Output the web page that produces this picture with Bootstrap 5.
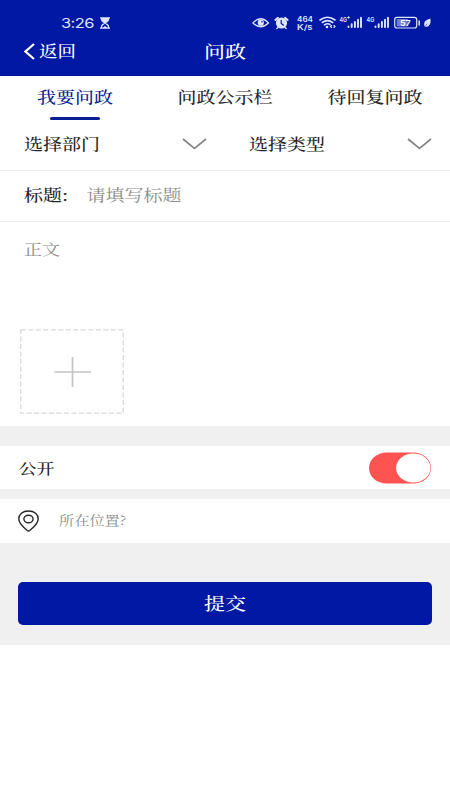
<!DOCTYPE html>
<html lang="zh-CN">
<head>
<meta charset="utf-8">
<meta name="viewport" content="width=device-width, initial-scale=1">
<title>问政</title>
<link href="https://cdn.jsdelivr.net/npm/bootstrap@5.3.0/dist/css/bootstrap.min.css" rel="stylesheet">
<style>
body{font-family:"Noto Serif CJK SC","Noto Sans CJK SC",serif;color:#252525;font-size:19px;line-height:1;background:#fff}
.wide{display:inline-block;transform:translateY(-.5px) scaleY(.83);line-height:1;white-space:nowrap;font-weight:500}
.app-head{height:76px;background:#0018a3;color:#fff}
.status{height:32px;padding:13px 18px 0 61px;font-family:Inter,"Noto Sans",sans-serif;color:#dfe5ff}
.clock{font-size:16.5px;width:33px;letter-spacing:-.6px;transform:scaleY(.83);line-height:20px}
.sandglass{margin:4px 0 0 5px}
.indicators{margin-top:-2px}
.status svg,.ico{display:block;flex:none}
.titlebar{height:38px}
.back{font-size:18.5px;padding-left:24px;color:#fff}
.title{font-size:21px}
.tabs{height:44px}
.tabs a{height:44px;color:#252525;text-decoration:none;padding-top:12px}
.tabs .wide{transform:translateY(-1.7px) scaleY(.83)}
.tabs a.active{color:#0a1f8f}
.tabs a.active::after{content:"";width:50px;height:3px;border-radius:2px;background:#0a1f95;margin-top:10px}
.picks{height:51px;border-bottom:1px solid #ececec}
.picks>div{padding:0 18px 3px 24px}
.subject{height:51px;padding:0 24px;border-bottom:1px solid #ececec}
.subject label{width:62.5px}
.subject .wide{transform:translateY(-2.2px) scaleY(.83)}
.hint,.hint .wide{color:#8c8c8c;font-weight:400}
.content-box{height:204px;padding:18px 20px 0}
.content-box .hint{font-size:18px;padding-left:4px;height:89px}
.upload{width:104px;height:85px}
.panel{background:#f0f0f0;height:219px;padding-top:20px}
.line{height:43px;background:#fff}
.public-line{font-size:18px;padding:0 18px 0 18.5px;margin-bottom:10px}
.public-line .wide{transform:translateY(-1px) scaleY(.83)}
.place-line{height:44px;padding-left:18px}
.place-line .hint{font-size:15.2px;margin-left:20px}
.submit{height:43px;margin:39px 18px 0;border-radius:5px;background:#0018a3;color:#fff;font-size:21px;border:0;padding:0;width:414px}
</style>
<script src="https://cdn.jsdelivr.net/npm/bootstrap@5.3.0/dist/js/bootstrap.bundle.min.js"></script>
</head>
<body>
<header class="app-head">
  <div class="status d-flex">
    <span class="clock">3:26</span>
    <svg class="sandglass" width="12" height="12" viewBox="0 0 12 12" fill="none" stroke="#dfe5ff"><path d="M1 .9h10M1 11.1h10M2.500 1v1.500Q2.500 4 6 6 9.500 4 9.500 2.500V1M2.500 11V9.500Q2.500 8 6 6 9.500 8 9.500 9.500V11" stroke-width="1.300"/><path d="M2.500 1h7v2L6 6 2.500 3zM3.500 11 6 9l2.500 2z" fill="#dfe5ff" stroke="none"/></svg>
    <svg class="indicators ms-auto" width="182" height="22" viewBox="250 11 182 22" fill="none" stroke="#dfe5ff" stroke-linecap="round">
      <path d="M253 23Q260.500 14.500 268.500 23 260.500 30.500 253 23Z" stroke-width="1.300"/><circle cx="260.800" cy="22.700" r="3.100" fill="#dfe5ff" stroke="none"/><circle cx="262" cy="21.800" r=".8" fill="#0018a3" stroke="none"/>
      <circle cx="281.500" cy="23" r="5.600" fill="#dfe5ff" stroke="none"/><path d="M275.300 20 278 17.800M287.700 20 285 17.800" stroke-width="1.900"/><path d="M278 27.500 276.800 28.600M285 27.500 286.200 28.600" stroke-width="1.300"/><path d="M281.200 20.300v3.100l2.300 1.800" stroke="#0018a3" stroke-width="1.200"/>
      <g fill="#dfe5ff" stroke="none" font-family="Inter, sans-serif" font-weight="600"><text x="297" y="21.800" font-size="7.600" textLength="16" lengthAdjust="spacingAndGlyphs">464</text><text x="297" y="29.800" font-size="7.600" textLength="15.500" lengthAdjust="spacingAndGlyphs">K/s</text>
      <text x="339.500" y="21.500" font-size="6.500" textLength="7.500" lengthAdjust="spacingAndGlyphs">4G</text><text x="366.500" y="21.500" font-size="6.500" textLength="7.800" lengthAdjust="spacingAndGlyphs">4G</text></g><path d="M347.600 17.500h2M348.600 16.500v2" stroke-width=".8"/>
      <path d="M320 20Q327.500 14.500 335 20M322.300 22.500Q327.500 18.800 332.700 22.500M324.500 24.800Q327.500 22.800 330 24.500" stroke-width="1.600"/><circle cx="327" cy="27" r="1.300" fill="#dfe5ff" stroke="none"/><path d="M331.500 25.500 330.500 26.500 331.500 27.500M334 25.500 335 26.500 334 27.500" stroke-width="1.100"/>
      <path d="M348.500 26.500v.5M351.700 24.300V27M354.900 22V27M358 19.800V27M361 17.800V27M375.500 26.500v.5M378.700 24.300V27M381.900 22V27M385 19.800V27M388 17.800V27" stroke-width="1.900"/>
      <rect x="394.700" y="17.400" width="22" height="10.600" rx="2.200" stroke-width="1.200"/><path d="M396.700 19h11v7.400h-11z" fill="#7380cb" stroke="none"/><text x="400" y="25.700" font-family="Inter,sans-serif" font-weight="600" font-size="8" textLength="10.700" lengthAdjust="spacingAndGlyphs" fill="#fff" stroke="none">57</text><path d="M419.200 21v4" stroke-width="1.500"/>
      <path d="M430.300 18.500C424.500 20 423.200 23 424.800 26.800 429.800 27.300 431.300 23 430.300 18.500Z" fill="#dfe5ff" stroke="none"/><path d="M425.300 26.300 427 24" stroke="#0018a3" stroke-width=".5"/>
    </svg>
  </div>
  <div class="titlebar row g-0 align-items-center">
    <a class="back col-4 d-flex align-items-center text-decoration-none" href="#"><svg class="ico" width="11" height="17" viewBox="0 0 11 17" fill="none" stroke="#fff" stroke-width="2.200"><path d="M10 1 1.500 8.500 10 16"/></svg><span class="wide ms-1">返回</span></a>
    <div class="title col-4 text-center"><span class="wide">问政</span></div>
  </div>
</header>
<main>
  <nav class="tabs row g-0">
    <a class="active col-4 d-flex flex-column align-items-center" href="#"><span class="wide">我要问政</span></a>
    <a class="col-4 text-center" href="#"><span class="wide">问政公示栏</span></a>
    <a class="col-4 text-center" href="#"><span class="wide">待回复问政</span></a>
  </nav>
  <div class="picks row g-0">
    <div class="col-6 d-flex align-items-center justify-content-between"><span class="wide">选择部门</span><svg class="ico" width="25" height="12" viewBox="0 0 25 12" fill="none" stroke="#858585" stroke-width="1.700"><path d="M1 1 12.500 10.500 24 1"/></svg></div>
    <div class="col-6 d-flex align-items-center justify-content-between"><span class="wide">选择类型</span><svg class="ico" width="25" height="12" viewBox="0 0 25 12" fill="none" stroke="#858585" stroke-width="1.700"><path d="M1 1 12.500 10.500 24 1"/></svg></div>
  </div>
  <div class="subject d-flex align-items-center"><label><span class="wide">标题:</span></label><span class="wide hint">请填写标题</span></div>
  <div class="content-box">
    <div class="hint"><span class="wide">正文</span></div>
    <svg class="upload d-block" viewBox="0 0 104 85" fill="none"><rect x=".8" y=".8" width="102.400" height="83.400" stroke="#d9d9d9" stroke-width="1.300" stroke-dasharray="5 2.500"/><path d="M34.500 43h36.500M52.500 28v30" stroke="#c4c4c4" stroke-width="1.700"/></svg>
  </div>
  <section class="panel">
    <div class="line public-line d-flex align-items-center justify-content-between"><span class="wide">公开</span><svg class="ico" width="64" height="32" viewBox="0 0 64 32"><path d="M18.500.5h27a17.500 15.500 0 0 1 0 31h-27a17.500 15.500 0 0 1 0-31Z" fill="#fd5451"/><ellipse cx="45.300" cy="16" rx="17.200" ry="14.400" fill="#fff"/></svg></div>
    <div class="line place-line d-flex align-items-center"><svg class="ico" width="21" height="22" viewBox="0 0 21 22" fill="none" stroke="#252525" stroke-width="1.400"><path d="M10.500 1C4.500 1 .8 4.500.8 9c0 5 5.200 8.600 8.500 11.500q1.200 1 2.400 0C15 17.600 20.200 14 20.200 9c0-4.500-3.700-8-9.700-8Z"/><ellipse cx="10.500" cy="9" rx="4.600" ry="3.800"/></svg><span class="wide hint">所在位置?</span></div>
    <button class="submit d-block" type="button"><span class="wide">提交</span></button>
  </section>
</main>
</body>
</html>
